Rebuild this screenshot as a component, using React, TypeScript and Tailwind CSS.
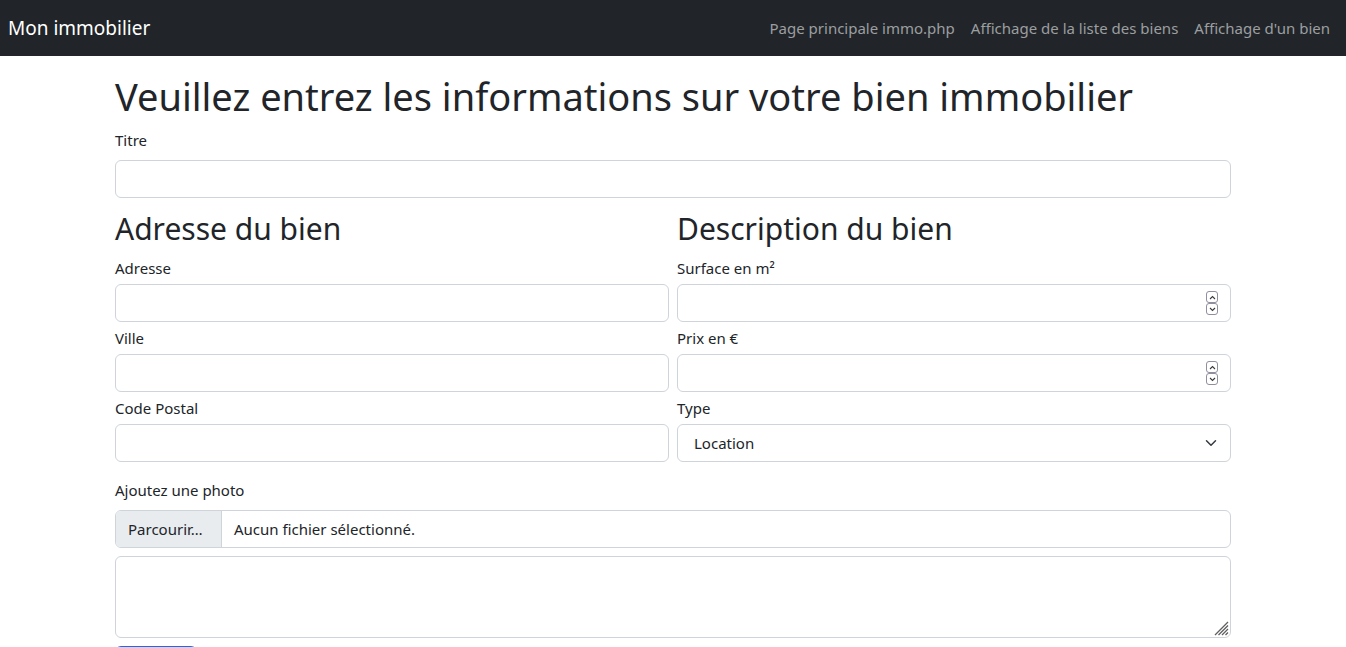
import React from "react";

const font = { fontFamily: '"Noto Sans", "Open Sans", sans-serif' };

function Field({ label, children }: { label: string; children: React.ReactNode }) {
  return (
    <div className="flex flex-col gap-1">
      <label className="text-[15px] leading-6">{label}</label>
      {children}
    </div>
  );
}

function TextInput() {
  return (
    <input
      type="text"
      className="h-[38px] w-full rounded-[6px] border border-[#ced4da] bg-white px-3 text-[15px] outline-none"
    />
  );
}

function NumberInput() {
  return (
    <div className="relative">
      <input
        type="text"
        inputMode="numeric"
        className="h-[38px] w-full rounded-[6px] border border-[#ced4da] bg-white px-3 pr-8 text-[15px] outline-none"
      />
      <div className="pointer-events-none absolute right-[13px] top-[7px] flex flex-col">
        <span className="flex h-[12px] w-[12px] items-center justify-center rounded-[3px] border border-[#8f8f9d] bg-white">
          <svg width="7" height="5" viewBox="0 0 7 5" fill="none" stroke="#3a3a3a" strokeWidth="1.1">
            <path d="M1 4 L3.5 1.5 L6 4" />
          </svg>
        </span>
        <span className="flex h-[12px] w-[12px] items-center justify-center rounded-[3px] border border-[#8f8f9d] bg-white">
          <svg width="7" height="5" viewBox="0 0 7 5" fill="none" stroke="#3a3a3a" strokeWidth="1.1">
            <path d="M1 1 L3.5 3.5 L6 1" />
          </svg>
        </span>
      </div>
    </div>
  );
}

export default function App() {
  return (
    <div className="min-h-screen bg-white text-[#212529]" style={font}>
      <nav className="flex h-14 items-center justify-between bg-[#212529] pl-2 pr-2">
        <span className="text-[19px] leading-[30px] text-white">Mon immobilier</span>
        <ul className="flex">
          {["Page principale immo.php", "Affichage de la liste des biens", "Affichage d'un bien"].map((l) => (
            <li key={l}>
              <a className="block px-2 py-2 text-[15px] text-[#9c9ea0]">{l}</a>
            </li>
          ))}
        </ul>
      </nav>

      <main className="mx-auto w-[1116px] pt-4">
        <h1 className="mb-2 text-[38px] leading-[48px]">
          Veuillez entrez les informations sur votre bien immobilier
        </h1>
        <div className="flex flex-col gap-2">
          <label className="text-[15px] leading-6">Titre</label>
          <TextInput />
        </div>

        <div className="mt-3 grid grid-cols-2 gap-x-2">
          <div>
            <h2 className="mb-2 text-[30px] leading-[38px]">Adresse du bien</h2>
            <div className="flex flex-col gap-1">
              <Field label="Adresse">
                <TextInput />
              </Field>
              <Field label="Ville">
                <TextInput />
              </Field>
              <Field label="Code Postal">
                <TextInput />
              </Field>
            </div>
          </div>
          <div>
            <h2 className="mb-2 text-[30px] leading-[38px]">Description du bien</h2>
            <div className="flex flex-col gap-1">
              <Field label="Surface en m²">
                <NumberInput />
              </Field>
              <Field label="Prix en €">
                <NumberInput />
              </Field>
              <Field label="Type">
                <div className="relative">
                  <select className="h-[38px] w-full appearance-none rounded-[6px] border border-[#ced4da] bg-white pl-4 pr-9 text-[15px] outline-none">
                    <option>Location</option>
                    <option>Vente</option>
                  </select>
                  <svg
                    className="pointer-events-none absolute right-[14px] top-[13px]"
                    width="12"
                    height="12"
                    viewBox="0 0 16 16"
                    fill="none"
                    stroke="#343a40"
                    strokeWidth="2"
                    strokeLinecap="round"
                    strokeLinejoin="round"
                  >
                    <path d="M2 5l6 6 6-6" />
                  </svg>
                </div>
              </Field>
            </div>
          </div>
        </div>

        <div className="mt-4 flex flex-col gap-2">
          <label className="text-[15px] leading-6">Ajoutez une photo</label>
          <div className="flex h-[38px] overflow-hidden rounded-[6px] border border-[#ced4da]">
            <span className="flex w-[106px] shrink-0 items-center border-r border-[#ced4da] bg-[#e9ecef] px-3 text-[15px]">
              Parcourir…
            </span>
            <span className="flex items-center px-3 text-[15px]">Aucun fichier sélectionné.</span>
          </div>
          <div className="relative">
            <textarea className="block h-[82px] w-full resize-none rounded-[6px] border border-[#ced4da] bg-white px-3 py-1.5 outline-none" />
            <svg
              className="pointer-events-none absolute bottom-[2px] right-[2px]"
              width="17"
              height="17"
              viewBox="0 0 17 17"
              stroke="#5f5f5f"
              strokeWidth="1.3"
            >
              <path d="M16 3 L3 16 M16 6.5 L6.5 16 M16 10 L10 16 M16 13.5 L13.5 16" />
            </svg>
          </div>
          <button className="h-[38px] w-[82px] rounded-[6px] bg-[#0d6efd] text-[15px] text-white">Ajouter</button>
        </div>
      </main>
    </div>
  );
}
